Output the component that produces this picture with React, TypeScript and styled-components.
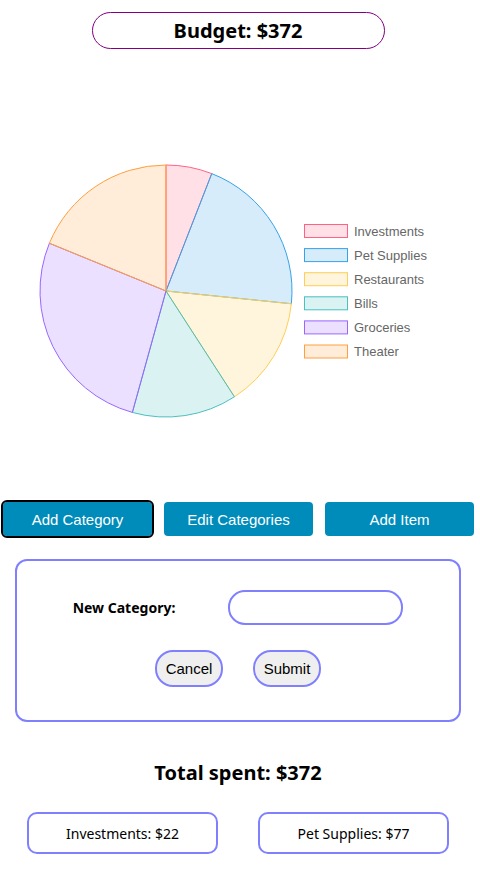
import React from "react";
import styled, { createGlobalStyle } from "styled-components";

const GlobalStyle = createGlobalStyle`
  html, body { margin: 0; padding: 0; background: #ffffff; }
  body { font-family: "Noto Sans", "Segoe UI", sans-serif; color: #000; }
  * { box-sizing: border-box; }
`;

const Page = styled.div`
  width: 476px;
  display: flex;
  flex-direction: column;
  align-items: center;
`;

const BudgetBox = styled.div`
  margin-top: 12px;
  width: 293px;
  height: 37px;
  border: 1px solid #800080;
  border-radius: 19px;
  display: flex;
  align-items: center;
  justify-content: center;
  font-size: 20px;
  font-weight: 700;
`;

const ChartSvg = styled.svg`
  display: block;
  width: 476px;
  height: 451px;
`;

const ButtonRow = styled.div`
  width: 476px;
  display: flex;
  gap: 11px;
  padding-left: 3px;
`;

const ActionButton = styled.button<{ $active?: boolean }>`
  width: 149px;
  height: 34px;
  margin-top: 2px;
  border: none;
  border-radius: 4px;
  background: #008cba;
  color: #ffffff;
  font-family: "Liberation Sans", Arial, sans-serif;
  font-size: 15px;
  padding: 0;
  outline: ${(p) => (p.$active ? "2px solid #000" : "none")};
  outline-offset: 0px;
  &:nth-child(n + 2) { margin-left: 1px; }
`;

const FormBox = styled.div`
  margin-top: 23px;
  width: 446px;
  height: 163px;
  border: 2px solid #8080ff;
  border-radius: 12px;
  display: flex;
  flex-direction: column;
  align-items: center;
  padding-top: 29px;
`;

const FieldRow = styled.div`
  display: flex;
  align-items: center;
  gap: 53px;
`;

const FieldLabel = styled.label`
  font-size: 14px;
  font-weight: 700;
`;

const TextInput = styled.input`
  width: 175px;
  height: 35px;
  border: 2px solid #8080ff;
  border-radius: 17px;
  outline: none;
  padding: 0 12px;
  background: #fff;
`;

const FormButtons = styled.div`
  margin-top: 25px;
  display: flex;
  gap: 30px;
`;

const PillButton = styled.button`
  width: 68px;
  height: 37px;
  border: 2px solid #8080ff;
  border-radius: 18px;
  background: #efefef;
  color: #000;
  font-family: "Liberation Sans", Arial, sans-serif;
  font-size: 15px;
  padding: 0;
`;

const TotalHeading = styled.h2`
  margin: 37px 0 0;
  font-size: 20px;
  font-weight: 700;
  line-height: 28px;
`;

const CardRow = styled.div`
  margin-top: 25px;
  display: flex;
  gap: 40px;
`;

const CategoryCard = styled.div`
  width: 191px;
  height: 42px;
  border: 2px solid #8080ff;
  border-radius: 10px;
  display: flex;
  align-items: center;
  justify-content: center;
  font-size: 14px;
`;

type Slice = { name: string; value: number; color: string };

const slices: Slice[] = [
  { name: "Investments", value: 22, color: "255,99,132" },
  { name: "Pet Supplies", value: 77, color: "54,162,235" },
  { name: "Restaurants", value: 53, color: "255,206,86" },
  { name: "Bills", value: 50, color: "75,192,192" },
  { name: "Groceries", value: 100, color: "153,102,255" },
  { name: "Theater", value: 70, color: "255,159,64" },
];

const CX = 166;
const CY = 242;
const R = 126;

function pt(deg: number) {
  const a = (deg * Math.PI) / 180;
  return [CX + R * Math.sin(a), CY - R * Math.cos(a)];
}

function arcPath(a0: number, a1: number) {
  const [x0, y0] = pt(a0);
  const [x1, y1] = pt(a1);
  const large = a1 - a0 > 180 ? 1 : 0;
  return `M ${CX} ${CY} L ${x0.toFixed(2)} ${y0.toFixed(2)} A ${R} ${R} 0 ${large} 1 ${x1.toFixed(2)} ${y1.toFixed(2)} Z`;
}

function PieChart() {
  const total = slices.reduce((s, x) => s + x.value, 0);
  let acc = 0;
  const paths = slices.map((s) => {
    const a0 = (acc / total) * 360;
    acc += s.value;
    const a1 = (acc / total) * 360;
    return (
      <path
        key={s.name}
        d={arcPath(a0, a1)}
        fill={`rgba(${s.color},0.2)`}
        stroke={`rgb(${s.color})`}
        strokeWidth={1}
        strokeLinejoin="round"
      />
    );
  });
  return (
    <ChartSvg viewBox="0 0 476 451">
      {paths}
      {slices.map((s, i) => {
        const top = 175 + i * 24.1;
        return (
          <g key={s.name}>
            <rect
              x={304.5}
              y={top + 0.5}
              width={43}
              height={13}
              fill={`rgba(${s.color},0.2)`}
              stroke={`rgb(${s.color})`}
              strokeWidth={1}
            />
            <text
              x={354}
              y={top + 7}
              dominantBaseline="central"
              fontFamily="Liberation Sans, Arial, sans-serif"
              fontSize={13}
              fill="#666666"
            >
              {s.name}
            </text>
          </g>
        );
      })}
    </ChartSvg>
  );
}

export default function App() {
  return (
    <>
      <GlobalStyle />
      <Page>
        <BudgetBox>Budget: $372</BudgetBox>
        <PieChart />
        <ButtonRow>
          <ActionButton $active>Add Category</ActionButton>
          <ActionButton>Edit Categories</ActionButton>
          <ActionButton>Add Item</ActionButton>
        </ButtonRow>
        <FormBox>
          <FieldRow>
            <FieldLabel>New Category:</FieldLabel>
            <TextInput />
          </FieldRow>
          <FormButtons>
            <PillButton>Cancel</PillButton>
            <PillButton>Submit</PillButton>
          </FormButtons>
        </FormBox>
        <TotalHeading>Total spent: $372</TotalHeading>
        <CardRow>
          <CategoryCard>Investments: $22</CategoryCard>
          <CategoryCard>Pet Supplies: $77</CategoryCard>
        </CardRow>
      </Page>
    </>
  );
}
